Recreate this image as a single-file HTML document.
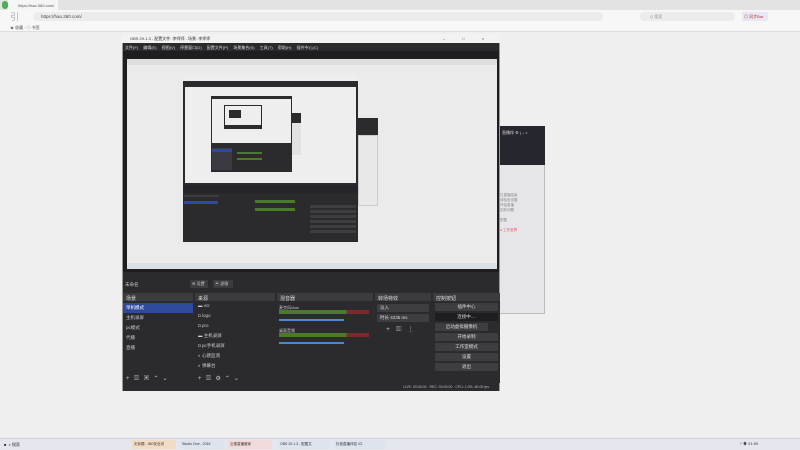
<!DOCTYPE html><html><head><meta charset="utf-8"><style>
*{margin:0;padding:0;box-sizing:border-box}
body{width:800px;height:450px;overflow:hidden;background:#efefef;font-family:"Liberation Sans","Noto Sans CJK SC",sans-serif;font-size:5px;color:#333;position:relative}
.a{position:absolute}
.dk{background:#2b2b2e}
.hd{background:#3c3c40;color:#ddd;font-size:5px;padding:2px 3px;height:8px}
.row{color:#ccc;font-size:4.5px;height:10px;line-height:10px;padding-left:3px}
.btn{background:#3e3e42;color:#ddd;font-size:4.5px;text-align:center;height:8px;line-height:8px;border-radius:1px;margin:2px 2px}
</style></head><body>
<!-- browser chrome -->
<div class="a" style="left:0;top:0;width:800px;height:10px;background:#e3e3e3"></div>
<div class="a" style="left:8px;top:0;width:50px;height:10px;background:#f5f5f5;font-size:4px;padding:3px 10px;color:#555">https://hao.360.com/</div>
<div class="a" style="left:2px;top:1px;width:6px;height:8px;background:#4caf50;border-radius:3px"></div>
<div class="a" style="left:0;top:10px;width:800px;height:13px;background:#f7f7f7"></div>
<div class="a" style="left:33px;top:12px;width:570px;height:9px;background:#ececec;border-radius:4px;font-size:4.5px;padding:2px 8px;color:#444">https://hao.360.com/</div>
<div class="a" style="left:640px;top:12px;width:95px;height:9px;background:#ececec;border-radius:4px;font-size:4px;padding:2px 10px;color:#999">Q 搜索</div>
<div class="a" style="left:742px;top:12px;width:26px;height:9px;background:#e6e8f3;font-size:4px;padding:2px;color:#c33">◎ 同步Bar</div>
<div class="a" style="left:0;top:23px;width:800px;height:9px;background:#f7f7f7;border-bottom:1px solid #ddd;font-size:4px;padding:2px 10px;color:#555">★ 收藏 · ◇ 书签</div>
<div class="a" style="left:0;top:10px;width:30px;height:22px;font-size:9px;color:#aaa;padding-left:10px">引</div>
<!-- OBS window -->
<div class="a" style="left:122px;top:34px;width:378px;height:357px;background:#2b2b2e;border:1px solid #999"></div>
<div class="a" style="left:122px;top:34px;width:378px;height:9px;background:#f2f2f2;font-size:4px;padding:2px 8px;color:#333">OBS 29.1.3 - 配置文件: 李师师 - 场景: 李师师<span style="float:right;letter-spacing:8px">– □ ×</span></div>
<div class="a" style="left:123px;top:43px;width:376px;height:8px;background:#2b2b2e;color:#ddd;font-size:4px;padding:2px 2px;word-spacing:4px">文件(F) 编辑(E) 视图(V) 停靠窗口(D) 配置文件(P) 场景集合(S) 工具(T) 帮助(H) 插件中心(C)</div>
<div class="a" style="left:123px;top:51px;width:376px;height:221px;background:#1e1e21"></div>
<!-- preview screenshot -->
<div class="a" style="left:127px;top:59px;width:370px;height:210px;background:#ebebeb"></div>
<div class="a" style="left:127px;top:59px;width:370px;height:6px;background:#dedede"></div>
<div class="a" style="left:127px;top:263px;width:370px;height:6px;background:#dcdfe4"></div>
<!-- nested right panel -->
<div class="a" style="left:358px;top:118px;width:20px;height:17px;background:#2b2b2e"></div>
<div class="a" style="left:358px;top:135px;width:20px;height:71px;background:#e8e8e8;border:1px solid #ccc"></div>
<!-- nested obs -->
<div class="a" style="left:183px;top:76px;width:175px;height:166px;background:#2b2b2e"></div>
<div class="a" style="left:183px;top:76px;width:175px;height:5px;background:#eee"></div>
<div class="a" style="left:185px;top:87px;width:171px;height:96px;background:#eee"></div>
<div class="a" style="left:292px;top:113px;width:9px;height:10px;background:#2b2b2e"></div>
<div class="a" style="left:292px;top:123px;width:9px;height:32px;background:#e2e2e2"></div>
<div class="a" style="left:211px;top:96px;width:81px;height:76px;background:#2b2b2e"></div>
<div class="a" style="left:212px;top:99px;width:79px;height:44px;background:#eee"></div>
<div class="a" style="left:224px;top:105px;width:38px;height:24px;background:#2b2b2e"></div>
<div class="a" style="left:225px;top:106px;width:36px;height:19px;background:#eee"></div>
<div class="a" style="left:229px;top:110px;width:12px;height:8px;background:#2b2b2e"></div>
<div class="a" style="left:212px;top:148px;width:20px;height:22px;background:#3a3a40"></div>
<div class="a" style="left:212px;top:149px;width:20px;height:3px;background:#2f4a9c"></div>
<div class="a" style="left:237px;top:152px;width:25px;height:2px;background:#4a7a2a"></div>
<div class="a" style="left:237px;top:158px;width:25px;height:2px;background:#4a7a2a"></div>
<div class="a" style="left:183px;top:185px;width:175px;height:8px;background:#26262a"></div>
<div class="a" style="left:184px;top:195px;width:35px;height:2px;background:#3c3c40"></div>
<div class="a" style="left:184px;top:201px;width:34px;height:3px;background:#2f4a9c"></div>
<div class="a" style="left:255px;top:200px;width:40px;height:3px;background:#4a7a2a"></div>
<div class="a" style="left:255px;top:208px;width:40px;height:3px;background:#4a7a2a"></div>
<div class="a" style="left:310px;top:205px;width:46px;height:30px;background:repeating-linear-gradient(#3e3e42 0 3px,#2b2b2e 3px 5px)"></div>
<!-- right panel window -->
<div class="a" style="left:500px;top:126px;width:45px;height:39px;background:#26262e;color:#ddd;font-size:4px;padding:4px 2px">直播伴 ⚙ | – ×</div>
<div class="a" style="left:500px;top:165px;width:45px;height:149px;background:#e6e6ea;border-right:1px solid #bbb;border-bottom:1px solid #bbb;font-size:3.5px;color:#888;padding-top:28px;line-height:5px">已直播结束<br>请检查设置<br>开始直播<br>如有问题<br><br>配置<br><br><span style="color:#e55">● 工作室界</span></div>
<!-- bottom -->
<div class="a" style="left:125px;top:282px;color:#ccc;font-size:4.5px">未命名</div>
<div class="a" style="left:190px;top:280px;width:18px;height:8px;background:#3c3c40;color:#ccc;font-size:4px;padding:1px 2px">⚙ 设置</div>
<div class="a" style="left:213px;top:280px;width:20px;height:8px;background:#3c3c40;color:#ccc;font-size:4px;padding:1px 2px">▣ 滤镜</div>
<!-- docks -->
<div class="a dk" style="left:123px;top:293px;width:70px;height:90px">
<div class="hd">场景</div>
<div class="row" style="background:#2f4a9c;color:#fff;margin-top:2px">单机模式</div>
<div class="row">主机录屏</div><div class="row">pc模式</div><div class="row">代播</div><div class="row">直播</div>
<div class="a" style="top:80px;left:3px;color:#ccc;font-size:6px;letter-spacing:4px">+▥▣⌃⌄</div></div>
<div class="a dk" style="left:195px;top:293px;width:80px;height:90px">
<div class="hd">来源</div>
<div class="row">▬ vcr</div><div class="row">◘ logo</div><div class="row">◘ pro</div><div class="row">▬ 主机录屏</div><div class="row">◘ pc手机录屏</div><div class="row">◐ 心跳监测</div><div class="row">◐ 弹幕台</div>
<div class="a" style="top:80px;left:3px;color:#ccc;font-size:6px;letter-spacing:4px">+▥⚙⌃⌄</div></div>
<div class="a dk" style="left:277px;top:293px;width:96px;height:90px">
<div class="hd">混音器</div>
<div class="a" style="left:2px;top:12px;color:#ccc;font-size:4px">麦克风/Aux</div>
<div class="a" style="left:2px;top:17px;width:90px;height:4px;background:linear-gradient(90deg,#4a7a2a 75%,#7a2a2a 75%)"></div>
<div class="a" style="left:2px;top:26px;width:65px;height:1.5px;background:#4a8ad0"></div>
<div class="a" style="left:2px;top:35px;color:#ccc;font-size:4px">桌面音频</div>
<div class="a" style="left:2px;top:40px;width:90px;height:4px;background:linear-gradient(90deg,#4a7a2a 75%,#7a2a2a 75%)"></div>
<div class="a" style="left:2px;top:49px;width:65px;height:1.5px;background:#4a8ad0"></div></div>
<div class="a dk" style="left:375px;top:293px;width:56px;height:90px">
<div class="hd">转场特效</div>
<div class="btn" style="text-align:left;padding-left:3px;margin-top:3px">淡入</div>
<div class="btn" style="text-align:left;padding-left:3px">时长 4235 ms</div>
<div style="color:#ccc;font-size:6px;text-align:center;letter-spacing:6px">+▥⋮</div></div>
<div class="a dk" style="left:433px;top:293px;width:67px;height:90px">
<div class="hd">控制按钮</div>
<div class="btn">插件中心</div><div class="btn" style="background:#1e1e21">连接中....</div><div class="btn" style="margin-right:12px">启动虚拟摄像机</div><div class="btn">开始录制</div><div class="btn">工作室模式</div><div class="btn">设置</div><div class="btn">退出</div></div>
<div class="a" style="left:123px;top:383px;width:376px;height:8px;background:#2b2b2e;color:#bbb;font-size:3.5px;text-align:right;padding:2px 10px">LIVE: 00:00:00 &nbsp; REC: 00:00:00 &nbsp; CPU: 1.0%, 60.00 fps</div>
<!-- taskbar -->
<div class="a" style="left:0;top:438px;width:800px;height:12px;background:#e4e8ee;border-top:1px solid #d0d4da;font-size:4px;color:#333;padding:3px 4px">■ &nbsp;⌕ 搜索</div>
<div class="a" style="left:132px;top:440px;width:44px;height:9px;background:#f3dcc4;font-size:3.5px;padding:2px">无标题 - 360安全浏</div>
<div class="a" style="left:180px;top:440px;width:44px;height:9px;background:#dde4ee;font-size:3.5px;padding:2px">Studio One - 2016</div>
<div class="a" style="left:228px;top:440px;width:44px;height:9px;background:#f0dada;font-size:3.5px;padding:2px">云推直播管家</div>
<div class="a" style="left:278px;top:440px;width:52px;height:9px;background:#dde4ee;font-size:3.5px;padding:2px">OBS 29.1.3 - 配置文</div>
<div class="a" style="left:334px;top:440px;width:52px;height:9px;background:#dde4ee;font-size:3.5px;padding:2px">抖音直播伴侣 V2.</div>
<div class="a" style="left:740px;top:441px;font-size:4px">^ ◉ 21:59</div>
</body></html>
